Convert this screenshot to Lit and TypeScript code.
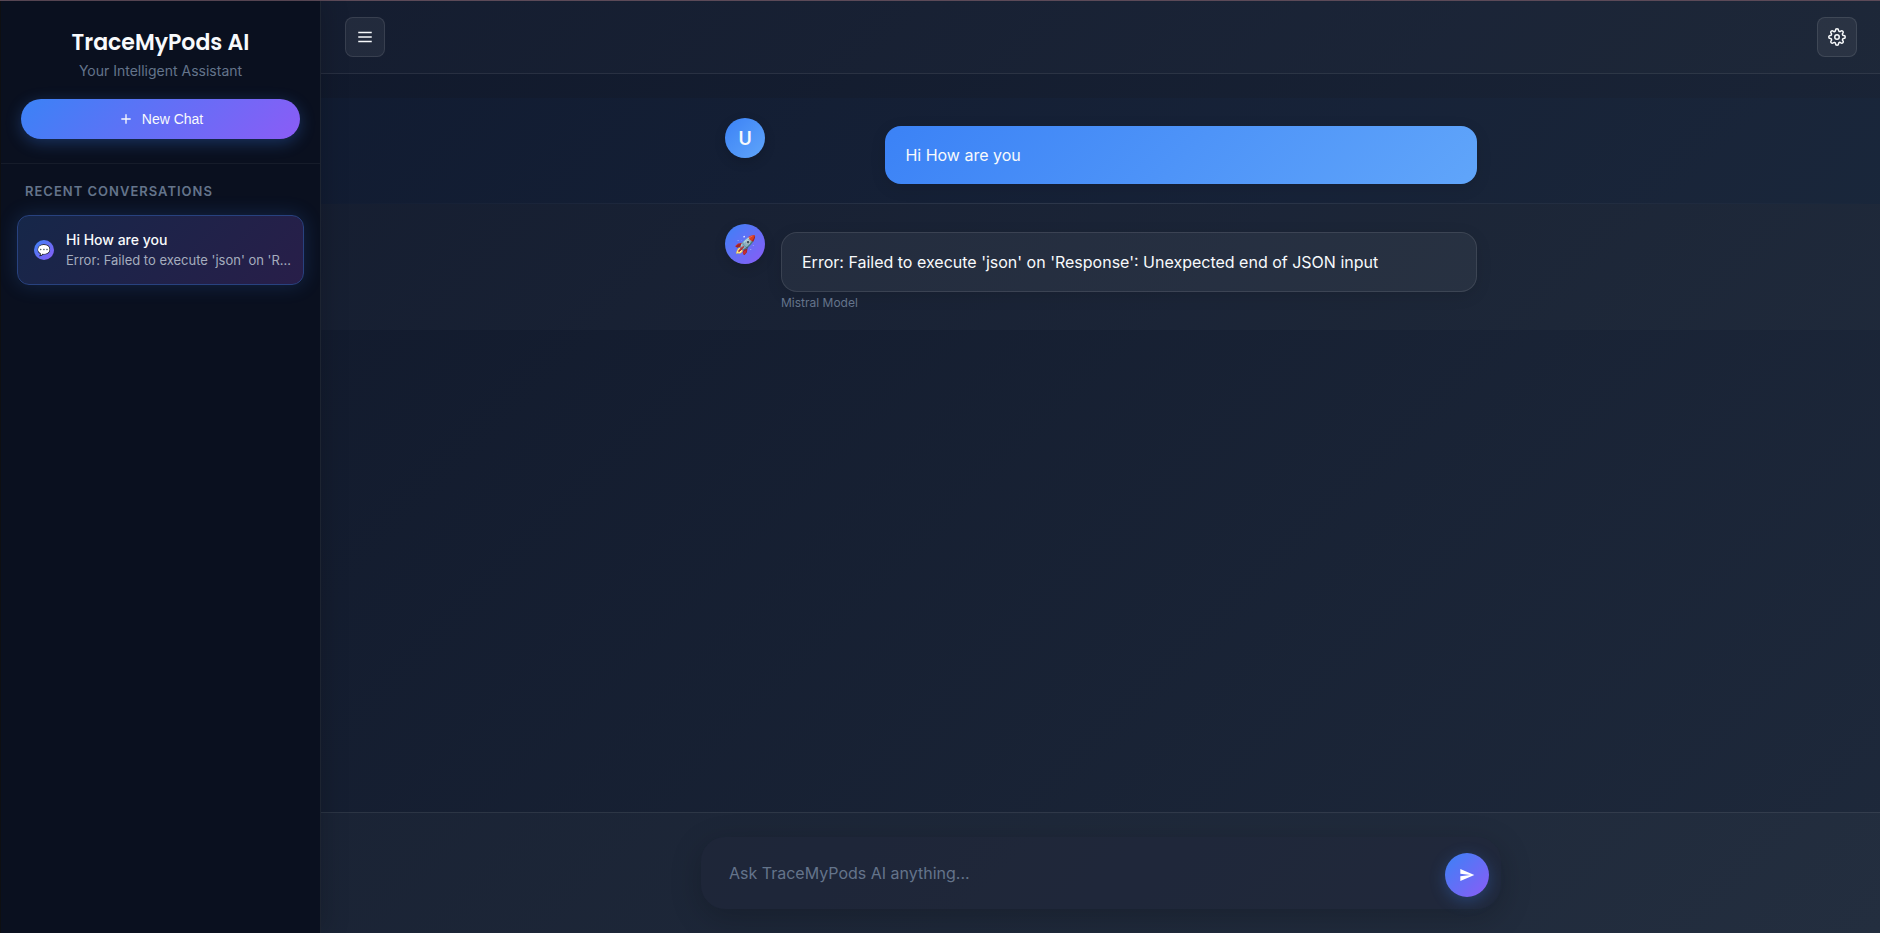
import { LitElement, html, css, svg } from "lit";
import { customElement, state } from "lit/decorators.js";

interface Conversation {
  title: string;
  preview: string;
}

interface Message {
  role: "user" | "assistant";
  text: string;
  model?: string;
}

@customElement("app-root")
export class AppRoot extends LitElement {
  static styles = css`
    :host {
      display: block;
      font-family: Inter, "Liberation Sans", sans-serif;
      font-size: 16px;
      color: #f8fafc;
    }
    * {
      box-sizing: border-box;
    }
    .frame {
      height: 100vh;
      padding: 1px 0 0 1px;
      overflow: hidden;
      background: linear-gradient(#5c4a58 1px, #0f1013 1px);
    }
    .app {
      display: flex;
      width: 100vw;
      height: 100%;
      background: linear-gradient(135deg, #0f172a 0%, #1e293b 100%);
    }
    .sidebar {
      position: relative;
      z-index: 1;
      flex: none;
      width: 320px;
      background: #0a101f;
      border-right: 1px solid #1d2431;
      box-shadow: 4px 0 24px rgba(0, 0, 0, 0.15);
    }
    .brand {
      padding: 24px 20px;
      border-bottom: 1px solid #161c2a;
      text-align: center;
    }
    .brand h1 {
      margin: 0;
      font-family: Poppins, Inter, sans-serif;
      font-size: 22px;
      line-height: 36px;
      font-weight: 600;
    }
    .brand p {
      margin: 0 0 18px;
      font-size: 14px;
      line-height: 20px;
      color: #64748b;
    }
    .new-chat {
      display: flex;
      align-items: center;
      justify-content: center;
      gap: 8px;
      width: 100%;
      height: 40px;
      padding: 0;
      border: 0;
      border-radius: 20px;
      background: linear-gradient(135deg, #3b82f6, #8b5cf6);
      box-shadow: 0 4px 16px rgba(59, 130, 246, 0.3);
      color: #f8fafc;
      font: 14px/20px "Liberation Sans", Arial, sans-serif;
    }
    .history {
      padding: 16px;
    }
    .history h2 {
      margin: 0 0 12px;
      padding: 0 8px;
      font-size: 13px;
      line-height: 23px;
      font-weight: 600;
      letter-spacing: 1px;
      text-transform: uppercase;
      color: #64748b;
    }
    .history ul {
      margin: 0;
      padding: 0;
      list-style: none;
    }
    .conversation {
      display: flex;
      align-items: center;
      gap: 12px;
      height: 70px;
      padding: 0 12px 0 16px;
      border: 1px solid #28427f;
      border-radius: 12px;
      background: linear-gradient(135deg, #162749, #281e49);
      box-shadow: 0 0 20px rgba(59, 130, 246, 0.2);
      color: #f8fafc;
      text-decoration: none;
    }
    .badge {
      flex: none;
      display: grid;
      place-items: center;
      width: 20px;
      height: 20px;
      border-radius: 50%;
      background: linear-gradient(135deg, #3b82f6, #8b5cf6);
      font-size: 11px;
    }
    .summary {
      min-width: 0;
    }
    .summary strong,
    .summary span {
      display: block;
      overflow: hidden;
      white-space: nowrap;
      text-overflow: ellipsis;
    }
    .summary strong {
      font-size: 14px;
      line-height: 20px;
      font-weight: 500;
    }
    .summary span {
      font-size: 13px;
      line-height: 20px;
      color: #a5adbe;
    }
    .main {
      flex: 1;
      min-width: 0;
      display: flex;
      flex-direction: column;
    }
    .topbar {
      display: flex;
      justify-content: space-between;
      padding: 16px 24px;
      border-bottom: 1px solid rgba(255, 255, 255, 0.08);
      background: rgba(255, 255, 255, 0.02);
    }
    .tool {
      display: grid;
      place-items: center;
      width: 40px;
      height: 40px;
      padding: 0;
      border: 1px solid rgba(255, 255, 255, 0.1);
      border-radius: 8px;
      background: rgba(255, 255, 255, 0.06);
      color: #f8fafc;
    }
    .messages {
      flex: 1;
      padding: 24px 0;
      overflow: hidden;
    }
    .row {
      position: relative;
      padding: 20px 24px;
      background: rgba(255, 255, 255, 0.02);
    }
    .row.user {
      background: rgba(20, 66, 110, 0.08);
    }
    .row.user::after {
      content: "";
      position: absolute;
      inset: auto 0 0;
      height: 1px;
      background: linear-gradient(90deg, transparent, rgba(255, 255, 255, 0.1), transparent);
    }
    .line {
      display: flex;
      gap: 16px;
      max-width: 752px;
      margin: 0 auto;
    }
    .avatar {
      flex: none;
      display: grid;
      place-items: center;
      width: 40px;
      height: 40px;
      border-radius: 50%;
      background: linear-gradient(135deg, #3b82f6, #8b5cf6);
      box-shadow: 0 4px 12px rgba(0, 0, 0, 0.15);
      font-size: 18px;
      font-weight: 600;
    }
    .user .avatar {
      background: linear-gradient(135deg, #3b82f6, #60a5fa);
    }
    .body {
      flex: 1;
      padding-top: 8px;
    }
    .bubble {
      margin: 0;
      padding: 16px 20px;
      border: 1px solid rgba(255, 255, 255, 0.1);
      border-radius: 16px;
      background: rgba(255, 255, 255, 0.05);
      box-shadow: 0 4px 16px rgba(0, 0, 0, 0.1);
      line-height: 26px;
    }
    .user .bubble {
      width: 85%;
      margin-left: auto;
      border: 0;
      background: linear-gradient(135deg, #3b82f6, #60a5fa);
    }
    .model {
      margin: 4px 0 0;
      font-size: 12px;
      line-height: 14px;
      color: #64748b;
    }
    .dock {
      padding: 24px;
      border-top: 1px solid rgba(255, 255, 255, 0.08);
      background: rgba(255, 255, 255, 0.025);
    }
    .composer {
      display: flex;
      align-items: flex-end;
      gap: 12px;
      max-width: 800px;
      height: 72px;
      margin: 0 auto;
      padding: 12px 12px 12px 28px;
      border-radius: 24px;
      background: rgba(31, 38, 58, 0.5);
      box-shadow: 0 8px 32px rgba(0, 0, 0, 0.2);
    }
    .composer input {
      flex: 1;
      min-width: 0;
      height: 48px;
      padding: 0;
      border: 0;
      outline: 0;
      background: none;
      color: #f8fafc;
      font: inherit;
    }
    .composer input::placeholder {
      color: #64748b;
      opacity: 1;
    }
    .send {
      display: grid;
      place-items: center;
      width: 44px;
      height: 44px;
      padding: 0;
      border: 0;
      border-radius: 50%;
      background: linear-gradient(135deg, #3b82f6, #8b5cf6);
      box-shadow: 0 4px 16px rgba(59, 130, 246, 0.3);
      color: #fff;
    }
    svg {
      display: block;
    }
  `;

  @state() private conversations: Conversation[] = [
    {
      title: "Hi How are you",
      preview: "Error: Failed to execute 'json' on 'Response': Unexpected end of JSON input",
    },
  ];

  @state() private messages: Message[] = [
    { role: "user", text: "Hi How are you" },
    {
      role: "assistant",
      text: "Error: Failed to execute 'json' on 'Response': Unexpected end of JSON input",
      model: "Mistral Model",
    },
  ];

  private icon(size: number, content: unknown) {
    return html`<svg width=${size} height=${size} viewBox="0 0 24 24" fill="none" stroke="currentColor" stroke-width="2" aria-hidden="true">${content}</svg>`;
  }

  private renderMessage(m: Message) {
    return html`
      <article class="row ${m.role}">
        <div class="line">
          <div class="avatar">${m.role === "user" ? "U" : "🚀"}</div>
          <div class="body">
            <p class="bubble">${m.text}</p>
            ${m.model ? html`<p class="model">${m.model}</p>` : null}
          </div>
        </div>
      </article>
    `;
  }

  render() {
    return html`
      <div class="frame">
        <div class="app">
          <aside class="sidebar">
            <header class="brand">
              <h1>TraceMyPods AI</h1>
              <p>Your Intelligent Assistant</p>
              <button class="new-chat" type="button">
                ${this.icon(16, svg`<path d="M12 5v14M5 12h14" />`)}
                New Chat
              </button>
            </header>
            <nav class="history" aria-label="Recent conversations">
              <h2>Recent Conversations</h2>
              <ul>
                ${this.conversations.map(
                  (c) => html`
                    <li>
                      <a class="conversation" href="#">
                        <span class="badge">💬</span>
                        <span class="summary"><strong>${c.title}</strong><span>${c.preview}</span></span>
                      </a>
                    </li>
                  `
                )}
              </ul>
            </nav>
          </aside>
          <main class="main">
            <header class="topbar">
              <button class="tool" type="button" aria-label="Toggle sidebar">
                ${this.icon(18, svg`<path d="M3 6h18M3 12h18M3 18h18" />`)}
              </button>
              <button class="tool" type="button" aria-label="Settings">
                ${this.icon(
                  18,
                  svg`<circle cx="12" cy="12" r="3" /><path d="M19.4 15a1.65 1.65 0 0 0 .33 1.82l.06.06a2 2 0 0 1 0 2.83 2 2 0 0 1-2.83 0l-.06-.06a1.65 1.65 0 0 0-1.82-.33 1.65 1.65 0 0 0-1 1.51V21a2 2 0 0 1-2 2 2 2 0 0 1-2-2v-.09A1.65 1.65 0 0 0 9 19.4a1.65 1.65 0 0 0-1.82.33l-.06.06a2 2 0 0 1-2.83 0 2 2 0 0 1 0-2.83l.06-.06a1.65 1.65 0 0 0 .33-1.82 1.65 1.65 0 0 0-1.51-1H3a2 2 0 0 1-2-2 2 2 0 0 1 2-2h.09A1.65 1.65 0 0 0 4.6 9a1.65 1.65 0 0 0-.33-1.82l-.06-.06a2 2 0 0 1 0-2.83 2 2 0 0 1 2.83 0l.06.06a1.65 1.65 0 0 0 1.82.33H9a1.65 1.65 0 0 0 1-1.51V3a2 2 0 0 1 2-2 2 2 0 0 1 2 2v.09a1.65 1.65 0 0 0 1 1.51 1.65 1.65 0 0 0 1.82-.33l.06-.06a2 2 0 0 1 2.83 0 2 2 0 0 1 0 2.83l-.06.06a1.65 1.65 0 0 0-.33 1.82V9a1.65 1.65 0 0 0 1.51 1H21a2 2 0 0 1 2 2 2 2 0 0 1-2 2h-.09a1.65 1.65 0 0 0-1.51 1z" />`
                )}
              </button>
            </header>
            <section class="messages" aria-label="Messages">
              ${this.messages.map((m) => this.renderMessage(m))}
            </section>
            <footer class="dock">
              <form class="composer" @submit=${(e: Event) => e.preventDefault()}>
                <input type="text" aria-label="Message" placeholder="Ask TraceMyPods AI anything..." />
                <button class="send" type="submit" aria-label="Send">
                  <svg width="16" height="16" viewBox="0 0 24 24" fill="currentColor" aria-hidden="true">
                    <path d="M2 21l21-9L2 3v7l15 2-15 2v7z" />
                  </svg>
                </button>
              </form>
            </footer>
          </main>
        </div>
      </div>
    `;
  }
}
